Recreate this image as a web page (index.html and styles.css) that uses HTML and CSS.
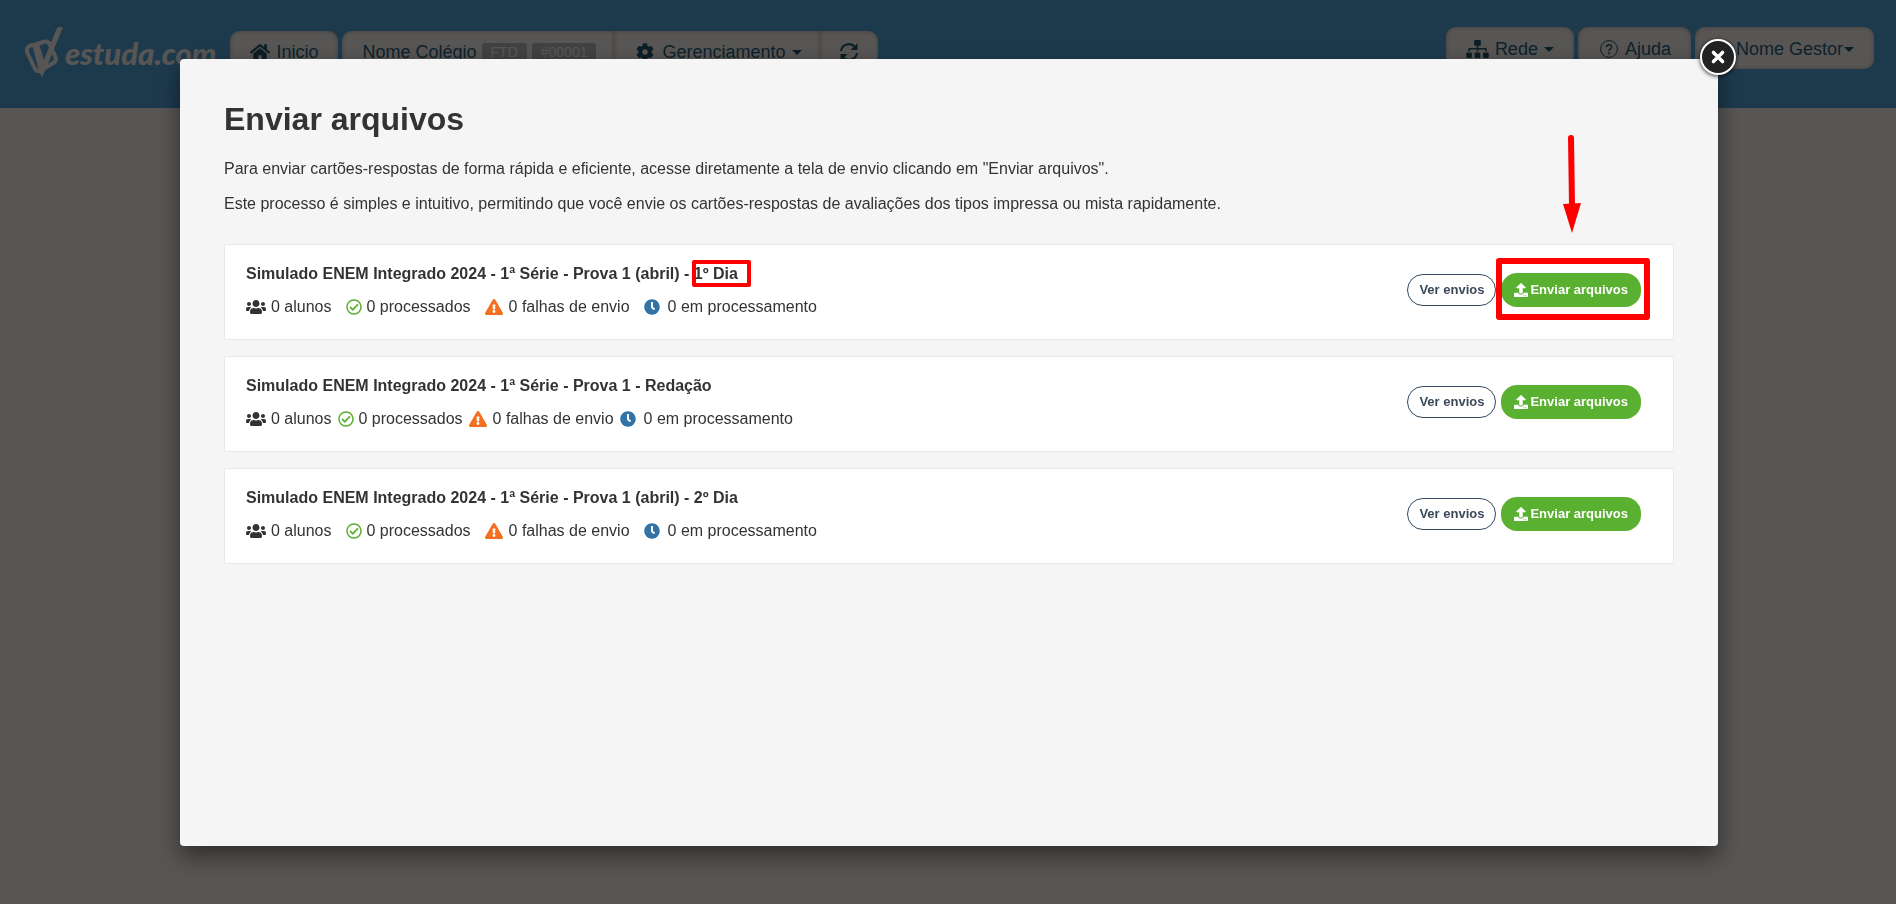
FILE: index.html
```html
<!DOCTYPE html>
<html lang="pt-BR">
<head>
    <meta charset="UTF-8">
    <meta name="viewport" content="width=device-width, initial-scale=1.0">
    <title>Enviar arquivos - estuda.com</title>
    <link rel="stylesheet" href="styles.css">
</head>
<body>
    <svg class="sprite" aria-hidden="true">
        <symbol id="i-home" viewBox="0 0 576 512"><path d="M280.37 148.26L96 300.11V464a16 16 0 0 0 16 16l112.06-.29a16 16 0 0 0 15.92-16V368a16 16 0 0 1 16-16h64a16 16 0 0 1 16 16v95.64a16 16 0 0 0 16 16.05L464 480a16 16 0 0 0 16-16V300L295.67 148.26a12.19 12.19 0 0 0-15.3 0zM571.6 251.47L488 182.56V44.05a12 12 0 0 0-12-12h-56a12 12 0 0 0-12 12v72.61L318.47 43a48 48 0 0 0-61 0L4.34 251.47a12 12 0 0 0-1.6 16.9l25.5 31A12 12 0 0 0 45.15 301l235.22-193.74a12.19 12.19 0 0 1 15.3 0L530.9 301a12 12 0 0 0 16.9-1.6l25.5-31a12 12 0 0 0-1.7-16.93z"/></symbol>
        <symbol id="i-cog" viewBox="0 0 512 512"><path d="M487.4 315.7l-42.6-24.6c4.3-23.2 4.3-47 0-70.2l42.6-24.6c4.9-2.8 7.1-8.6 5.5-14-11.1-35.6-30-67.8-54.7-94.6-3.8-4.1-10-5.1-14.8-2.3L380.8 110c-17.9-15.4-38.5-27.3-60.8-35.1V25.8c0-5.6-3.9-10.5-9.4-11.7-36.7-8.2-74.3-7.8-109.2 0-5.5 1.2-9.4 6.1-9.4 11.7V75c-22.2 7.9-42.8 19.8-60.8 35.1L88.7 85.5c-4.9-2.8-11-1.9-14.8 2.3-24.7 26.7-43.6 58.9-54.7 94.6-1.7 5.4.6 11.2 5.5 14L67.3 221c-4.3 23.2-4.3 47 0 70.2l-42.6 24.6c-4.9 2.8-7.1 8.6-5.5 14 11.1 35.6 30 67.8 54.7 94.6 3.8 4.1 10 5.1 14.8 2.3l42.6-24.6c17.9 15.4 38.5 27.3 60.8 35.1v49.2c0 5.6 3.9 10.5 9.4 11.7 36.7 8.2 74.3 7.8 109.2 0 5.5-1.2 9.4-6.1 9.4-11.7v-49.2c22.2-7.9 42.8-19.8 60.8-35.1l42.6 24.6c4.9 2.8 11 1.9 14.8-2.3 24.7-26.7 43.6-58.9 54.7-94.6 1.5-5.5-.7-11.3-5.6-14.1zM256 336c-44.1 0-80-35.9-80-80s35.9-80 80-80 80 35.9 80 80-35.9 80-80 80z"/></symbol>
        <symbol id="i-refresh" viewBox="0 0 18 18"><path d="M1 8a8 8 0 0 1 14-4M17 10a8 8 0 0 1-14 4" fill="none" stroke="currentColor" stroke-width="2"/><path d="M17.500 0v7h-7l2.300-2.300 2.400-2.200zM.5 18v-7h7l-2.300 2.300-2.400 2.200z"/></symbol>
        <symbol id="i-sitemap" viewBox="0 0 640 512"><path d="M128 352H32c-17.67 0-32 14.33-32 32v96c0 17.67 14.33 32 32 32h96c17.67 0 32-14.33 32-32v-96c0-17.67-14.33-32-32-32zm-24-80h192v48h48v-48h192v48h48v-57.59c0-21.17-17.23-38.41-38.41-38.41H344v-64h40c17.67 0 32-14.33 32-32V32c0-17.67-14.33-32-32-32H256c-17.67 0-32 14.33-32 32v96c0 17.67 14.33 32 32 32h40v64H94.41C73.23 224 56 241.23 56 262.41V320h48v-48zm264 80h-96c-17.67 0-32 14.33-32 32v96c0 17.67 14.33 32 32 32h96c17.67 0 32-14.33 32-32v-96c0-17.67-14.33-32-32-32zm240 0h-96c-17.67 0-32 14.33-32 32v96c0 17.67 14.33 32 32 32h96c17.67 0 32-14.33 32-32v-96c0-17.67-14.33-32-32-32z"/></symbol>
        <symbol id="i-help" viewBox="0 0 18 18"><g fill="none" stroke="currentColor"><circle cx="9" cy="9" r="8.400" stroke-width="1"/><path d="M6.500 7.200C6.500 3.800 11.700 4 11.600 7c0 1.700-2.600 2-2.600 4" stroke-width="1.400"/></g><circle cx="9" cy="13.200" r="1"/></symbol>
        <symbol id="i-users" viewBox="0 0 640 512"><path d="M96 224c35.3 0 64-28.7 64-64s-28.7-64-64-64-64 28.7-64 64 28.7 64 64 64zm448 0c35.3 0 64-28.7 64-64s-28.7-64-64-64-64 28.7-64 64 28.7 64 64 64zm32 32h-64c-17.6 0-33.5 7.1-45.1 18.6 40.3 22.1 68.9 62 75.1 109.4h66c17.7 0 32-14.3 32-32v-32c0-35.3-28.7-64-64-64zm-256 0c61.9 0 112-50.1 112-112S381.9 32 320 32 208 82.1 208 144s50.1 112 112 112zm76.8 32h-8.3c-20.8 10-43.9 16-68.5 16s-47.6-6-68.5-16h-8.3C179.6 288 128 339.6 128 403.2V432c0 26.5 21.5 48 48 48h288c26.5 0 48-21.5 48-48v-28.8c0-63.6-51.6-115.2-115.2-115.2zm-223.7-13.4C161.5 263.1 145.6 256 128 256H64c-35.3 0-64 28.7-64 64v32c0 17.7 14.3 32 32 32h65.9c6.3-47.4 34.9-87.3 75.2-109.4z"/></symbol>
        <symbol id="i-check" viewBox="0 0 512 512"><path d="M256 8C119.033 8 8 119.033 8 256s111.033 248 248 248 248-111.033 248-248S392.967 8 256 8zm0 48c110.532 0 200 89.451 200 200 0 110.532-89.451 200-200 200-110.532 0-200-89.451-200-200 0-110.532 89.451-200 200-200m140.204 130.267l-22.536-22.718c-4.667-4.705-12.265-4.736-16.97-.068L215.346 303.697l-59.792-60.277c-4.667-4.705-12.265-4.736-16.97-.069l-22.719 22.536c-4.705 4.667-4.736 12.265-.068 16.971l90.781 91.516c4.667 4.705 12.265 4.736 16.97.068l172.589-171.204c4.704-4.668 4.734-12.266.067-16.971z"/></symbol>
        <symbol id="i-warning" viewBox="0 0 576 512"><path d="M569.517 440.013C587.975 472.007 564.806 512 527.94 512H48.054c-36.937 0-59.999-40.055-41.577-71.987L246.423 23.985c18.467-32.009 64.72-31.951 83.154 0l239.94 416.028zM288 354c-25.405 0-46 20.595-46 46s20.595 46 46 46 46-20.595 46-46-20.595-46-46-46zm-43.673-165.346l7.418 136c.347 6.364 5.609 11.346 11.982 11.346h48.546c6.373 0 11.635-4.982 11.982-11.346l7.418-136c.375-6.874-5.098-12.654-11.982-12.654h-63.383c-6.884 0-12.356 5.78-11.981 12.654z"/></symbol>
        <symbol id="i-clock" viewBox="0 0 512 512"><path d="M256,8C119,8,8,119,8,256S119,504,256,504,504,393,504,256,393,8,256,8Zm92.49,313h0l-20,25a16,16,0,0,1-22.49,2.5h0l-67-49.72a40,40,0,0,1-15-31.23V112a16,16,0,0,1,16-16h32a16,16,0,0,1,16,16V256l58,42.5A16,16,0,0,1,348.49,321Z"/></symbol>
        <symbol id="i-upload" viewBox="0 0 512 512"><path d="M296 384h-80c-13.3 0-24-10.7-24-24V192h-87.7c-17.8 0-26.7-21.5-14.1-34.1L242.3 5.7c7.5-7.5 19.8-7.5 27.3 0l152.2 152.2c12.6 12.6 3.7 34.1-14.1 34.1H320v168c0 13.3-10.7 24-24 24zm216-8v112c0 13.3-10.7 24-24 24H24c-13.3 0-24-10.7-24-24V376c0-13.3 10.7-24 24-24h136v8c0 30.9 25.1 56 56 56h80c30.9 0 56-25.1 56-56v-8h136c13.3 0 24 10.7 24 24zm-124 88c0-11-9-20-20-20s-20 9-20 20 9 20 20 20 20-9 20-20zm64 0c0-11-9-20-20-20s-20 9-20 20 9 20 20 20 20-9 20-20z"/></symbol>
    </svg>

    <header class="topbar">
        <a class="logo" href="#" aria-label="estuda.com">
            <svg class="logo-mark" viewBox="0 0 38 50">
                <g fill="none" stroke="currentColor" stroke-width="4" stroke-linejoin="round" stroke-linecap="round">
                    <path d="M7 18Q0 20 2.500 26L9.500 41Q11.500 45 16 44"/>
                    <path d="M9 18 20 14.500Q23 14 24.500 17L30.500 30Q32 34 28.500 36L18 42"/>
                </g>
                <path d="M7 17h7l5 16L31.500 2Q32.500 0 35 0h3L20 44l-3 6-3-6z"/>
            </svg>
            <span class="logo-text">estuda.com</span>
        </a>
        <nav class="menu">
            <a class="tab" href="#"><svg class="icon-home"><use href="#i-home"/></svg>Inicio</a>
            <div class="tab-group">
                <a class="tab" href="#">Nome Colégio <span class="label">FTD</span> <span class="label">#00001</span></a>
                <button class="tab tab-manage" type="button"><svg class="icon-cog"><use href="#i-cog"/></svg>Gerenciamento<span class="caret"></span></button>
                <button class="tab" type="button" aria-label="Atualizar"><svg class="icon-cog"><use href="#i-refresh"/></svg></button>
            </div>
        </nav>
        <nav class="menu menu-user">
            <button class="tab" type="button"><svg class="icon-sitemap"><use href="#i-sitemap"/></svg>Rede<span class="caret"></span></button>
            <a class="tab tab-help" href="#"><svg class="icon-cog"><use href="#i-help"/></svg>Ajuda</a>
            <button class="tab tab-user" type="button">Nome Gestor<span class="caret"></span></button>
        </nav>
    </header>

    <div class="overlay">
        <main class="modal" role="dialog" aria-labelledby="modal-title">
            <button class="close" type="button" aria-label="Fechar">
                <svg viewBox="0 0 14 14"><path d="M3 3l8 8M11 3l-8 8"/></svg>
            </button>

            <h1 id="modal-title">Enviar arquivos</h1>
            <p>Para enviar cartões-respostas de forma rápida e eficiente, acesse diretamente a tela de envio clicando em "Enviar arquivos".</p>
            <p>Este processo é simples e intuitivo, permitindo que você envie os cartões-respostas de avaliações dos tipos impressa ou mista rapidamente.</p>

            <div class="list">
                <section class="card">
                    <div class="info">
                        <h2>Simulado ENEM Integrado 2024 - 1ª Série - Prova 1 (abril) - <span class="mark">1º Dia</span></h2>
                        <ul class="stats">
                            <li><svg class="users"><use href="#i-users"/></svg>0 alunos</li>
                            <li><svg class="check"><use href="#i-check"/></svg>0 processados</li>
                            <li><svg class="warning"><use href="#i-warning"/></svg>0 falhas de envio</li>
                            <li><svg class="clock"><use href="#i-clock"/></svg>0 em processamento</li>
                        </ul>
                    </div>
                    <div class="actions">
                        <button class="btn btn-outline" type="button">Ver envios</button>
                        <div class="highlight">
                            <button class="btn btn-green" type="button"><svg><use href="#i-upload"/></svg>Enviar arquivos</button>
                            <svg class="arrow" viewBox="0 0 18 98"><path d="M8 3 9 70" stroke="#f00" stroke-width="6" stroke-linecap="round"/><path d="M0 69 18 68 9 98z" fill="#f00"/></svg>
                        </div>
                    </div>
                </section>

                <section class="card">
                    <div class="info">
                        <h2>Simulado ENEM Integrado 2024 - 1ª Série - Prova 1 - Redação</h2>
                        <ul class="stats stats-tight">
                            <li><svg class="users"><use href="#i-users"/></svg>0 alunos</li>
                            <li><svg class="check"><use href="#i-check"/></svg>0 processados</li>
                            <li><svg class="warning"><use href="#i-warning"/></svg>0 falhas de envio</li>
                            <li><svg class="clock"><use href="#i-clock"/></svg>0 em processamento</li>
                        </ul>
                    </div>
                    <div class="actions">
                        <button class="btn btn-outline" type="button">Ver envios</button>
                        <button class="btn btn-green" type="button"><svg><use href="#i-upload"/></svg>Enviar arquivos</button>
                    </div>
                </section>

                <section class="card">
                    <div class="info">
                        <h2>Simulado ENEM Integrado 2024 - 1ª Série - Prova 1 (abril) - 2º Dia</h2>
                        <ul class="stats">
                            <li><svg class="users"><use href="#i-users"/></svg>0 alunos</li>
                            <li><svg class="check"><use href="#i-check"/></svg>0 processados</li>
                            <li><svg class="warning"><use href="#i-warning"/></svg>0 falhas de envio</li>
                            <li><svg class="clock"><use href="#i-clock"/></svg>0 em processamento</li>
                        </ul>
                    </div>
                    <div class="actions">
                        <button class="btn btn-outline" type="button">Ver envios</button>
                        <button class="btn btn-green" type="button"><svg><use href="#i-upload"/></svg>Enviar arquivos</button>
                    </div>
                </section>
            </div>
        </main>
    </div>
</body>
</html>
```

FILE: styles.css
```css
* {
    box-sizing: border-box;
}
body {
    margin: 0;
    min-height: 100vh;
    background-color: #fbf6f0;
    color: #333;
    font-family: "Liberation Sans", Arial, sans-serif;
    font-size: 16px;
    line-height: 24px;
}
button {
    font-family: inherit;
    cursor: pointer;
}
svg {
    fill: currentColor;
    flex: none;
}
.sprite {
    display: none;
}

/* top bar */
.topbar {
    display: flex;
    align-items: flex-start;
    height: 108px;
    padding: 27px 22px 0 25px;
    background-color: #53a6dc;
}
.logo {
    display: flex;
    gap: 2px;
    color: #fbf6f0;
    text-decoration: none;
}
.logo-mark {
    width: 38px;
    height: 50px;
}
.logo-text {
    font-family: Lato, sans-serif;
    font-size: 31px;
    font-style: italic;
    font-weight: 900;
    line-height: 52px;
}
.menu {
    display: flex;
    gap: 4px;
    margin: 4px 0 0 14px;
}
.menu-user {
    margin: 0 0 0 auto;
}
.tab {
    display: flex;
    align-items: center;
    height: 42px;
    padding: 0 20px;
    border: none;
    border-radius: 10px;
    background-color: #fbf6f0;
    box-shadow: inset 0 0 4px #b8b2aa;
    color: #28617e;
    font-size: 18px;
    line-height: 24px;
    text-decoration: none;
    white-space: nowrap;
}
.tab svg {
    color: #22566c;
}
.tab-group {
    display: flex;
}
.tab-group .tab {
    border-radius: 0;
}
.tab-group .tab:first-child {
    padding-right: 18px;
    border-radius: 10px 0 0 10px;
}
.tab-group .tab:last-child {
    border-radius: 0 10px 10px 0;
}
.tab-group .tab-manage {
    padding: 0 18px 0 22px;
}
.menu-user .tab {
    padding-top: 2px;
}
.menu-user .tab-help {
    padding-left: 22px;
}
.menu-user .tab-user {
    padding-left: 41px;
}
.icon-home {
    width: 20px;
    height: 18px;
    margin-right: 6px;
}
.icon-cog {
    width: 18px;
    height: 18px;
}
.tab-manage svg {
    margin-right: 8px;
}
.tab-help svg {
    margin-right: 7px;
}
.icon-sitemap {
    width: 23px;
    height: 18px;
    margin-right: 6px;
}
.caret {
    margin-left: 6px;
    border: 5px solid transparent;
    border-top-color: #22566c;
    border-bottom: none;
}
.tab-user .caret {
    margin-left: 1px;
}
.label {
    margin-left: 5px;
    padding: 0 9px;
    border-radius: 3px;
    background-color: #bbb;
    color: #fbf6f0;
    font-size: 14px;
    line-height: 18px;
}

/* modal */
.overlay {
    position: fixed;
    inset: 0;
    display: flex;
    padding: 59px 178px 58px 180px;
    background-color: rgba(0, 0, 0, 0.65);
}
.modal {
    position: relative;
    flex: 1;
    padding: 30px 44px;
    border-radius: 4px;
    background-color: #f5f5f5;
    box-shadow: 0 10px 25px rgba(0, 0, 0, 0.5);
}
.close {
    position: absolute;
    top: -20px;
    right: -18px;
    display: flex;
    align-items: center;
    justify-content: center;
    width: 36px;
    height: 36px;
    padding: 0;
    border: 2px solid #fff;
    border-radius: 50%;
    background-color: #222;
    box-shadow: 0 1px 4px rgba(0, 0, 0, 0.8);
}
.close svg {
    width: 16px;
    height: 16px;
    stroke: #fff;
    stroke-width: 3;
    stroke-linecap: round;
}
h1 {
    margin: 10px 0 18px;
    font-size: 32px;
    line-height: 40px;
}
p {
    margin: 0 0 11px;
}
.list {
    display: flex;
    flex-direction: column;
    gap: 16px;
    margin-top: 28px;
}
.card {
    display: flex;
    justify-content: space-between;
    align-items: flex-start;
    padding: 17px 32px 20px 21px;
    border: 1px solid #e8e8e8;
    background-color: #fff;
}
h2 {
    margin: 0 0 9px;
    font-size: 16px;
    line-height: 24px;
}
.mark {
    position: relative;
}
.mark::after {
    content: "";
    position: absolute;
    inset: -5px -13px -5px -2px;
    border: 4px solid #f00;
    border-radius: 2px;
}
.stats {
    display: flex;
    gap: 14px;
    margin: 0;
    padding: 0;
    list-style: none;
}
.stats-tight {
    gap: 6px;
}
.stats li {
    display: flex;
    align-items: center;
}
.stats svg {
    width: 16px;
    height: 16px;
    margin-right: 5px;
}
.stats .users {
    width: 20px;
}
.stats .check {
    color: #5ab031;
}
.stats .warning {
    width: 18px;
    margin-right: 6px;
    color: #f36f21;
}
.stats .clock {
    margin-right: 8px;
    color: #3274a8;
}
.actions {
    display: flex;
    align-items: center;
    gap: 5px;
    padding-top: 11px;
}
.btn {
    display: flex;
    align-items: center;
    border-radius: 16px;
    font-size: 13px;
    font-weight: bold;
    line-height: 16px;
    white-space: nowrap;
}
.btn-outline {
    height: 32px;
    padding: 0 11px;
    border: 1px solid #34495e;
    background-color: #fff;
    color: #3b4a5a;
}
.btn-green {
    height: 34px;
    padding: 0 13px;
    border: none;
    background-color: #5ab031;
    color: #fff;
}
.btn-green svg {
    width: 14px;
    height: 14px;
    margin-right: 2px;
}
.highlight {
    position: relative;
}
.highlight::after {
    content: "";
    position: absolute;
    inset: -15px -9px -13px -5px;
    border: 6px solid #f00;
    border-radius: 3px;
    pointer-events: none;
}
.arrow {
    position: absolute;
    top: -138px;
    left: 62px;
    width: 18px;
    height: 98px;
}
```
